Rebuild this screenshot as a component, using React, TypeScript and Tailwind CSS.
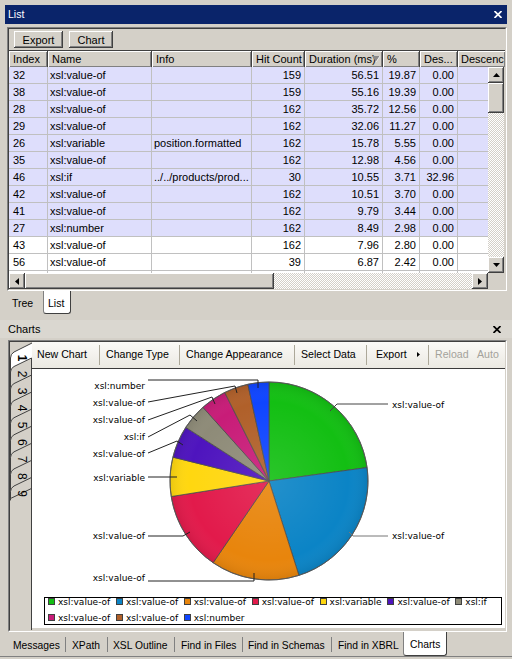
import React from "react";

type Row = [string, string, string, string, string, string, string];

const rows: Row[] = [
  ["32", "xsl:value-of", "", "159", "56.51", "19.87", "0.00"],
  ["38", "xsl:value-of", "", "159", "55.16", "19.39", "0.00"],
  ["28", "xsl:value-of", "", "162", "35.72", "12.56", "0.00"],
  ["29", "xsl:value-of", "", "162", "32.06", "11.27", "0.00"],
  ["26", "xsl:variable", "position.formatted", "162", "15.78", "5.55", "0.00"],
  ["35", "xsl:value-of", "", "162", "12.98", "4.56", "0.00"],
  ["46", "xsl:if", "../../products/prod...", "30", "10.55", "3.71", "32.96"],
  ["42", "xsl:value-of", "", "162", "10.51", "3.70", "0.00"],
  ["41", "xsl:value-of", "", "162", "9.79", "3.44", "0.00"],
  ["27", "xsl:number", "", "162", "8.49", "2.98", "0.00"],
  ["43", "xsl:value-of", "", "162", "7.96", "2.80", "0.00"],
  ["56", "xsl:value-of", "", "39", "6.87", "2.42", "0.00"],
  ["", "", "", "", "", "", ""],
];

const W = ["w-[39px]", "w-[104px]", "w-[100px]", "w-[53px]", "w-[78px]", "w-[37px]", "w-[38px]"];
const PADL = ["pl-[4px]", "pl-[2px]", "pl-[2px]"];
const headers = ["Index", "Name", "Info", "Hit Count", "Duration (ms)", "%", "Des..."];

const raised =
  "shadow-[inset_-1px_-1px_0_#404040,inset_1px_1px_0_#ffffff,inset_-2px_-2px_0_#808080]";
const track =
  "bg-[repeating-conic-gradient(#ffffff_0%_25%,#d4d0c8_0%_50%)] bg-[length:2px_2px]";

const slices = [
  { v: 19.87, c: "#13bf13" },
  { v: 19.39, c: "#0b84c6" },
  { v: 12.56, c: "#e8850c" },
  { v: 11.27, c: "#e21a4b" },
  { v: 5.55, c: "#ffd710" },
  { v: 4.56, c: "#4e14be" },
  { v: 3.71, c: "#8e8b78" },
  { v: 3.7, c: "#c81c78" },
  { v: 3.44, c: "#b0602a" },
  { v: 2.98, c: "#0f45ff" },
];

const legend: [string, string][] = [
  ["#13bf13", "xsl:value-of"],
  ["#0b84c6", "xsl:value-of"],
  ["#e8850c", "xsl:value-of"],
  ["#e21a4b", "xsl:value-of"],
  ["#ffd710", "xsl:variable"],
  ["#4e14be", "xsl:value-of"],
  ["#8e8b78", "xsl:if"],
  ["#c81c78", "xsl:value-of"],
  ["#b0602a", "xsl:value-of"],
  ["#0f45ff", "xsl:number"],
];

const CX = 269;
const CY = 481;
const R = 99;

function piePaths() {
  const total = slices.reduce((a, s) => a + s.v, 0);
  let acc = 0;
  return slices.map((s) => {
    const a0 = (acc / total) * 2 * Math.PI;
    acc += s.v;
    const a1 = (acc / total) * 2 * Math.PI;
    const x0 = CX + R * Math.sin(a0);
    const y0 = CY - R * Math.cos(a0);
    const x1 = CX + R * Math.sin(a1);
    const y1 = CY - R * Math.cos(a1);
    const large = a1 - a0 > Math.PI ? 1 : 0;
    return { d: `M${CX} ${CY} L${x0} ${y0} A${R} ${R} 0 ${large} 1 ${x1} ${y1} Z`, c: s.c };
  });
}

const leaders: { pts: string; col: string }[] = [
  { pts: "330,411 337,404 388,404", col: "#444" },
  { pts: "349,532 353,536 388,536", col: "#777" },
  { pts: "148,380 258,380 258,388", col: "#222" },
  { pts: "148,402 235,386 237,393", col: "#222" },
  { pts: "148,420 212,397 215,404", col: "#222" },
  { pts: "148,437 190,415 197,421", col: "#222" },
  { pts: "148,453 177,441 183,445", col: "#222" },
  { pts: "148,477 177,477", col: "#222" },
  { pts: "148,536 183,536 190,532", col: "#222" },
  { pts: "148,581 254,581 254,573", col: "#222" },
];

const leftLabels: [number, string][] = [
  [388.5, "xsl:number"],
  [405.5, "xsl:value-of"],
  [423.3, "xsl:value-of"],
  [440, "xsl:if"],
  [456.6, "xsl:value-of"],
  [480.6, "xsl:variable"],
  [539.3, "xsl:value-of"],
  [581.3, "xsl:value-of"],
];

function Tri({ dir }: { dir: "up" | "down" | "left" | "right" }) {
  if (dir === "up")
    return (
      <svg width="7" height="4" viewBox="0 0 7 4">
        <polygon points="0,4 7,4 3.5,0" fill="#000" />
      </svg>
    );
  if (dir === "down")
    return (
      <svg width="7" height="4" viewBox="0 0 7 4">
        <polygon points="0,0 7,0 3.5,4" fill="#000" />
      </svg>
    );
  if (dir === "left")
    return (
      <svg width="4" height="7" viewBox="0 0 4 7">
        <polygon points="4,0 4,7 0,3.5" fill="#000" />
      </svg>
    );
  return (
    <svg width="4" height="7" viewBox="0 0 4 7">
      <polygon points="0,0 0,7 4,3.5" fill="#000" />
    </svg>
  );
}

function VTabs() {
  const tabs = [2, 3, 4, 5, 6, 7, 8, 9];
  return (
    <svg width="22" height="288" viewBox="10 342 22 288" className="shrink-0 block">
      <rect x="10" y="342" width="22" height="288" fill="#d4d0c8" />
      <path d="M32 342 L32 343 L14 352 Q10.5 354 10.5 358 L10.5 390 L32 390 Z" fill="#ffffff" />
      <path d="M32 343 L14 352 Q10.5 354 10.5 358 L10.5 390" fill="none" stroke="#404040" />
      <text
        x="21.5"
        y="358"
        transform="rotate(90 21.5 358)"
        textAnchor="middle"
        dominantBaseline="central"
        className="font-['Liberation_Sans',Arial,sans-serif] text-[12px] font-bold"
        fill="#000"
      >
        1
      </text>
      {tabs.map((k) => {
        const t = 358 + (k - 2) * 17.07;
        const last = k === 9;
        const fillD = last
          ? `M31.5 ${t} L14 ${t + 8.5} Q10.5 ${t + 10.5} 10.5 ${t + 14} L10.5 ${t + 21} L31.5 ${t + 11} Z`
          : `M31.5 ${t} L14 ${t + 8.5} Q10.5 ${t + 10.5} 10.5 ${t + 14} L10.5 ${t + 40} L31.5 ${t + 40} Z`;
        const strokeD = last
          ? `M31.5 ${t} L14 ${t + 8.5} Q10.5 ${t + 10.5} 10.5 ${t + 14} L10.5 ${t + 21} L31.5 ${t + 11}`
          : `M31.5 ${t} L14 ${t + 8.5} Q10.5 ${t + 10.5} 10.5 ${t + 14} L10.5 ${t + 40}`;
        const cy = t + 16;
        return (
          <g key={k}>
            <path d={fillD} fill="#d4d0c8" />
            <path d={strokeD} fill="none" stroke="#404040" />
            <text
              x="21.5"
              y={cy}
              transform={`rotate(90 21.5 ${cy})`}
              textAnchor="middle"
              dominantBaseline="central"
              className="font-['Liberation_Sans',Arial,sans-serif] text-[12px]"
              fill="#000"
            >
              {k}
            </text>
          </g>
        );
      })}
      <line x1="31.5" y1="358" x2="31.5" y2="630" stroke="#404040" />
    </svg>
  );
}

function Pie() {
  const paths = piePaths();
  return (
    <svg
      width="473"
      height="228"
      viewBox="32 369 473 228"
      className="block font-['DejaVu_Sans',sans-serif] text-[9px]"
    >
      <defs>
        <radialGradient id="shade" cx="269" cy="481" r="99" gradientUnits="userSpaceOnUse">
          <stop offset="0" stopColor="#ffffff" stopOpacity="0.1" />
          <stop offset="0.8" stopColor="#ffffff" stopOpacity="0" />
          <stop offset="1" stopColor="#000000" stopOpacity="0.08" />
        </radialGradient>
      </defs>
      {paths.map((p, i) => (
        <path key={i} d={p.d} fill={p.c} stroke="#4a4a4a" strokeWidth="0.8" strokeLinejoin="round" />
      ))}
      <circle cx={CX} cy={CY} r={R} fill="url(#shade)" />
      <circle cx={CX} cy={CY} r={R} fill="none" stroke="#555" strokeWidth="0.8" />
      {leaders.map((l, i) => (
        <polyline key={i} points={l.pts} fill="none" stroke={l.col} strokeWidth="1" />
      ))}
      <text x="392" y="407.5" fill="#000">
        xsl:value-of
      </text>
      <text x="392" y="539" fill="#000">
        xsl:value-of
      </text>
      {leftLabels.map(([y, t], i) => (
        <text key={i} x="145" y={y} textAnchor="end" fill="#000">
          {t}
        </text>
      ))}
    </svg>
  );
}

function CloseX({ color }: { color: string }) {
  return (
    <svg width="8" height="7" viewBox="0 0 8 7">
      <line x1="0.5" y1="0" x2="7.5" y2="7" stroke={color} strokeWidth="1.7" />
      <line x1="7.5" y1="0" x2="0.5" y2="7" stroke={color} strokeWidth="1.7" />
    </svg>
  );
}

export default function App() {
  return (
    <div className="w-[512px] h-[659px] bg-[#d4d0c8] font-['Liberation_Sans',Arial,sans-serif] text-[11px] text-black overflow-hidden flex flex-col">
      <div className="h-[5px] shrink-0" />
      {/* List title bar */}
      <div className="mx-[5px] h-[19px] shrink-0 bg-[#0a246a] flex items-center justify-between pl-[3px] pr-[5px] text-white text-[10.5px]">
        <span>List</span>
        <CloseX color="#ffffff" />
      </div>
      <div className="h-[3px] shrink-0" />
      {/* List panel */}
      <div className="ml-[7px] mr-[5px] h-[264px] shrink-0 border border-t-[#808080] border-l-[#808080] border-r-white border-b-white">
        <div className="h-full border border-t-[#404040] border-l-[#404040] border-r-[#d4d0c8] border-b-[#d4d0c8] flex flex-col">
          {/* toolbar */}
          <div className="h-[21px] shrink-0 flex items-start pt-[2px] pl-[5px] gap-[6px]">
            <div className={`w-[49px] h-[17px] ${raised} flex items-center justify-center leading-[16px]`}>Export</div>
            <div className={`w-[44px] h-[17px] ${raised} flex items-center justify-center leading-[16px]`}>Chart</div>
          </div>
          {/* header */}
          <div className="h-[17px] shrink-0 flex border-t border-[#404040]">
            {headers.map((h, j) => (
              <div
                key={j}
                className={`${W[j]} shrink-0 h-[16px] leading-[16px] pl-[4px] whitespace-nowrap overflow-hidden relative bg-[#d4d0c8] border-r border-[#404040] shadow-[inset_1px_1px_0_#ffffff,inset_-1px_-1px_0_#808080]`}
              >
                {h}
                {j === 4 && (
                  <svg width="8" height="6" viewBox="0 0 8 6" className="absolute right-[2px] top-[5px]">
                    <polygon points="0,0 8,0 4,6" fill="#8a8a8a" />
                    <line x1="4" y1="6" x2="8" y2="0" stroke="#ffffff" strokeWidth="0.8" />
                  </svg>
                )}
              </div>
            ))}
            <div className="flex-1 h-[16px] leading-[16px] pl-[3px] whitespace-nowrap overflow-hidden bg-[#d4d0c8] shadow-[inset_1px_1px_0_#ffffff,inset_-1px_-1px_0_#808080]">
              Descenc
            </div>
          </div>
          {/* rows + vscroll */}
          <div className="h-[206px] shrink-0 flex">
            <div className="w-[479px] shrink-0 overflow-hidden">
              {rows.map((r, i) => (
                <div key={i} className={`flex h-[17px] ${i < 10 ? "bg-[#dedefc]" : "bg-white"}`}>
                  {r.map((c, j) => (
                    <div
                      key={j}
                      className={`${W[j]} shrink-0 h-[17px] leading-[16px] border-r border-b border-[#c0c0c0] whitespace-nowrap overflow-hidden ${
                        j < 3 ? PADL[j] : "text-right pr-[3px]"
                      }`}
                    >
                      {c}
                    </div>
                  ))}
                  <div className="w-[30px] shrink-0 h-[17px] border-b border-[#c0c0c0]" />
                </div>
              ))}
            </div>
            <div className="w-[16px] shrink-0 flex flex-col">
              <div className={`h-[16px] shrink-0 bg-[#d4d0c8] ${raised} flex items-center justify-center`}>
                <Tri dir="up" />
              </div>
              <div className={`h-[30px] shrink-0 bg-[#d4d0c8] ${raised}`} />
              <div className={`flex-1 ${track}`} />
              <div className={`h-[16px] shrink-0 bg-[#d4d0c8] ${raised} flex items-center justify-center`}>
                <Tri dir="down" />
              </div>
            </div>
          </div>
          {/* hscroll */}
          <div className="h-[16px] shrink-0 flex">
            <div className={`w-[16px] shrink-0 bg-[#d4d0c8] ${raised} flex items-center justify-center`}>
              <Tri dir="left" />
            </div>
            <div className={`w-[249px] shrink-0 bg-[#d4d0c8] ${raised}`} />
            <div className={`w-[198px] shrink-0 ${track}`} />
            <div className={`w-[16px] shrink-0 bg-[#d4d0c8] ${raised} flex items-center justify-center`}>
              <Tri dir="right" />
            </div>
            <div className="flex-1 bg-[#d4d0c8]" />
          </div>
        </div>
      </div>
      {/* Tree / List tabs */}
      <div className="h-[24px] shrink-0 flex items-start text-[10.5px]">
        <div className="w-[43px] pl-[12px] pt-[6px] leading-[13px]">Tree</div>
        <div className="w-[28px] h-[23px] bg-white border-l border-r border-b border-l-[#808080] border-r-[#404040] border-b-[#404040] rounded-b-[3px] pl-[4px] pt-[6px] leading-[13px]">
          List
        </div>
      </div>
      <div className="h-[5px] shrink-0" />
      {/* Charts header */}
      <div className="h-[18px] shrink-0 bg-[#dad7d0] flex items-center justify-between pl-[8px] pr-[11px]">
        <span>Charts</span>
        <CloseX color="#000000" />
      </div>
      <div className="h-[2px] shrink-0" />
      {/* Charts panel */}
      <div className="ml-[8px] mr-[5px] h-[292px] shrink-0 border border-t-[#808080] border-l-[#808080] border-r-white border-b-white">
        <div className="h-full border border-t-[#404040] border-l-[#404040] border-r-[#d4d0c8] border-b-[#d4d0c8] flex">
          <VTabs />
          <div className="flex-1 flex flex-col min-w-0">
            {/* chart toolbar */}
            <div className="h-[27px] shrink-0 flex items-center bg-gradient-to-b from-[#fbfaf7] to-[#ebe9e2] border-b border-[#3a3a3a] text-[10.6px] whitespace-nowrap">
              <div className="w-[67px] shrink-0 pl-[5px]">New Chart</div>
              <div className="w-px h-[20px] shrink-0 bg-[#aca899]" />
              <div className="w-[79px] shrink-0 pl-[6px]">Change Type</div>
              <div className="w-px h-[20px] shrink-0 bg-[#aca899]" />
              <div className="w-[114px] shrink-0 pl-[6px]">Change Appearance</div>
              <div className="w-px h-[20px] shrink-0 bg-[#aca899]" />
              <div className="w-[71px] shrink-0 pl-[6px]">Select Data</div>
              <div className="w-px h-[20px] shrink-0 bg-[#aca899]" />
              <div className="w-[61px] shrink-0 pl-[9px] flex items-center">
                <span>Export</span>
                <span className="ml-[10px] flex">
                  <svg width="3" height="5" viewBox="0 0 3 5">
                    <polygon points="0,0 0,5 3,2.5" fill="#000" />
                  </svg>
                </span>
              </div>
              <div className="w-px h-[20px] shrink-0 bg-[#aca899]" />
              <div className="w-[42px] shrink-0 pl-[6px] text-[#a3a29b]">Reload</div>
              <div className="shrink-0 pl-[6px] text-[#a3a29b]">Auto</div>
            </div>
            {/* chart area */}
            <div className="h-[259px] shrink-0 bg-white flex flex-col">
              <Pie />
              <div className="ml-[12px] w-[458px] h-[28px] border border-black pl-[3px] grid grid-cols-[repeat(6,67.9px)_1fr] grid-rows-[16px_10px] font-['DejaVu_Sans',sans-serif] text-[9px]">
                {legend.map(([c, t], i) => (
                  <div key={i} className="flex items-start gap-[3px] overflow-hidden">
                    <div className="w-[7px] h-[7px] shrink-0 border border-[#404040] mt-0" style={{ backgroundColor: c }} />
                    <span className="leading-[8px] whitespace-nowrap">{t}</span>
                  </div>
                ))}
              </div>
            </div>
            <div className="flex-1 bg-[#d4d0c8]" />
          </div>
        </div>
      </div>
      {/* bottom tabs */}
      <div className="h-[24px] shrink-0 flex items-start text-[10.3px] whitespace-nowrap">
        <div className="w-[65px] shrink-0 pl-[13px] pt-[7px] leading-[13px]">Messages</div>
        <div className="w-px h-[15px] mt-[5px] shrink-0 bg-[#808080]" />
        <div className="w-[41px] shrink-0 pl-[6px] pt-[7px] leading-[13px]">XPath</div>
        <div className="w-px h-[15px] mt-[5px] shrink-0 bg-[#808080]" />
        <div className="w-[66px] shrink-0 pl-[5px] pt-[7px] leading-[13px]">XSL Outline</div>
        <div className="w-px h-[15px] mt-[5px] shrink-0 bg-[#808080]" />
        <div className="w-[67px] shrink-0 pl-[6px] pt-[7px] leading-[13px]">Find in Files</div>
        <div className="w-px h-[15px] mt-[5px] shrink-0 bg-[#808080]" />
        <div className="w-[88px] shrink-0 pl-[5px] pt-[7px] leading-[13px]">Find in Schemas</div>
        <div className="w-px h-[15px] mt-[5px] shrink-0 bg-[#808080]" />
        <div className="w-[71px] shrink-0 pl-[6px] pt-[7px] leading-[13px]">Find in XBRL</div>
        <div className="w-[44px] h-[24px] shrink-0 bg-white border-l border-r border-b border-l-[#808080] border-r-[#404040] border-b-[#404040] rounded-b-[3px] pl-[6px] pt-[6px] leading-[13px]">
          Charts
        </div>
      </div>
      <div className="h-[3px] shrink-0 border-t border-[#808080]" />
    </div>
  );
}
